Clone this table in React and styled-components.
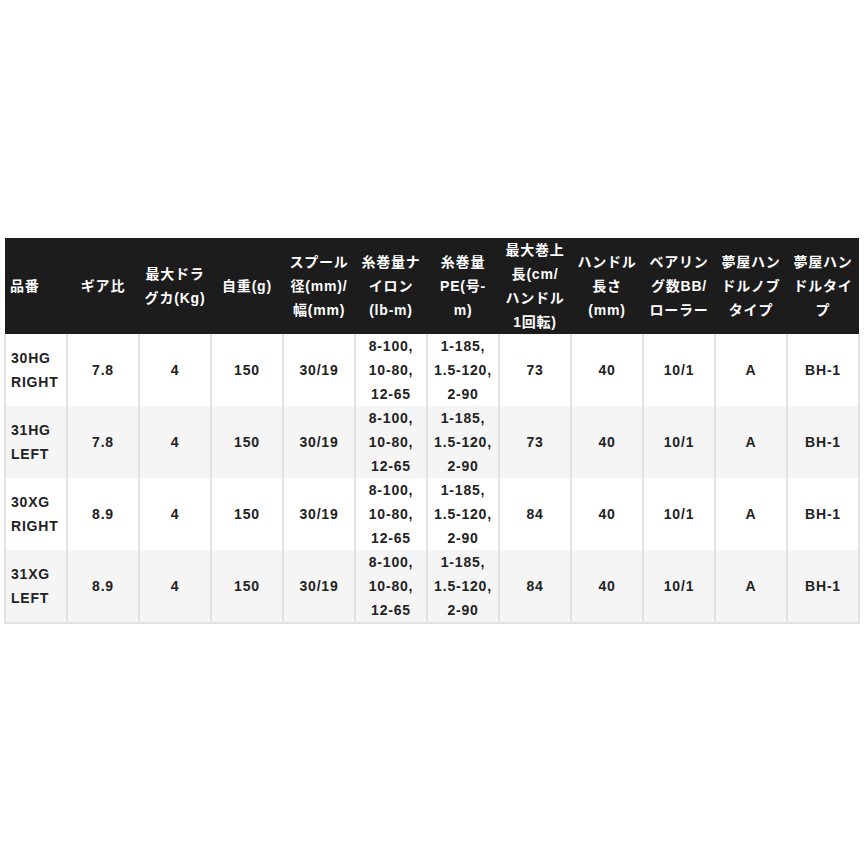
import React from "react";
import styled, { createGlobalStyle } from "styled-components";

const GlobalStyle = createGlobalStyle`
  body {
    margin: 0;
    background: #ffffff;
    font-family: "Liberation Sans", "Noto Sans CJK JP", sans-serif;
  }
`;

const Page = styled.div`
  padding: 238px 6px 0 4px;
`;

const SpecTable = styled.table`
  border-collapse: collapse;
  table-layout: fixed;
  width: 854px;
  font-size: 14px;
  font-weight: 700;
  line-height: 24px;
  letter-spacing: 0.8px;
  border-bottom: 2px solid #e2e2e2;
`;

const HeadCell = styled.th`
  box-sizing: border-box;
  height: 96px;
  padding: 0 2px;
  background: #1c1c1c;
  color: #ffffff;
  font-weight: 700;
  text-align: ${p => (p.left ? "left" : "center")};
  padding-left: ${p => (p.left ? "5px" : "2px")};
  vertical-align: middle;
  white-space: nowrap;
`;

const Row = styled.tr`
  background: ${p => (p.shaded ? "#f5f5f5" : "#ffffff")};
`;

const Cell = styled.td`
  box-sizing: border-box;
  height: 72px;
  padding: 0 2px;
  color: #222222;
  text-align: ${p => (p.left ? "left" : "center")};
  padding-left: ${p => (p.left ? "5px" : "2px")};
  vertical-align: middle;
  white-space: nowrap;
  border-left: 2px solid #e2e2e2;
  border-right: 2px solid #e2e2e2;
`;

const headers = [
  ["品番"],
  ["ギア比"],
  ["最大ドラ", "グカ(Kg)"],
  ["自重(g)"],
  ["スプール", "径(mm)/", "幅(mm)"],
  ["糸巻量ナ", "イロン", "(lb-m)"],
  ["糸巻量", "PE(号-", "m)"],
  ["最大巻上", "長(cm/", "ハンドル", "1回転)"],
  ["ハンドル", "長さ", "(mm)"],
  ["ベアリン", "グ数BB/", "ローラー"],
  ["夢屋ハン", "ドルノブ", "タイプ"],
  ["夢屋ハン", "ドルタイ", "プ"],
];

const nylon = ["8-100,", "10-80,", "12-65"];
const pe = ["1-185,", "1.5-120,", "2-90"];

const rows = [
  { name: ["30HG", "RIGHT"], gear: "7.8", len: "73" },
  { name: ["31HG", "LEFT"], gear: "7.8", len: "73" },
  { name: ["30XG", "RIGHT"], gear: "8.9", len: "84" },
  { name: ["31XG", "LEFT"], gear: "8.9", len: "84" },
];

const Lines = ({ lines }) =>
  lines.map((l, i) => (
    <React.Fragment key={i}>
      {i > 0 && <br />}
      {l}
    </React.Fragment>
  ));

export default function App() {
  return (
    <Page>
      <GlobalStyle />
      <SpecTable>
        <colgroup>
          <col style={{ width: 62 }} />
          {headers.slice(1).map((_, i) => (
            <col key={i} style={{ width: 72 }} />
          ))}
        </colgroup>
        <thead>
          <tr>
            {headers.map((h, i) => (
              <HeadCell key={i} left={i === 0}>
                <Lines lines={h} />
              </HeadCell>
            ))}
          </tr>
        </thead>
        <tbody>
          {rows.map((r, i) => (
            <Row key={i} shaded={i % 2 === 1}>
              <Cell left>
                <Lines lines={r.name} />
              </Cell>
              <Cell>{r.gear}</Cell>
              <Cell>4</Cell>
              <Cell>150</Cell>
              <Cell>30/19</Cell>
              <Cell>
                <Lines lines={nylon} />
              </Cell>
              <Cell>
                <Lines lines={pe} />
              </Cell>
              <Cell>{r.len}</Cell>
              <Cell>40</Cell>
              <Cell>10/1</Cell>
              <Cell>A</Cell>
              <Cell>BH-1</Cell>
            </Row>
          ))}
        </tbody>
      </SpecTable>
    </Page>
  );
}
